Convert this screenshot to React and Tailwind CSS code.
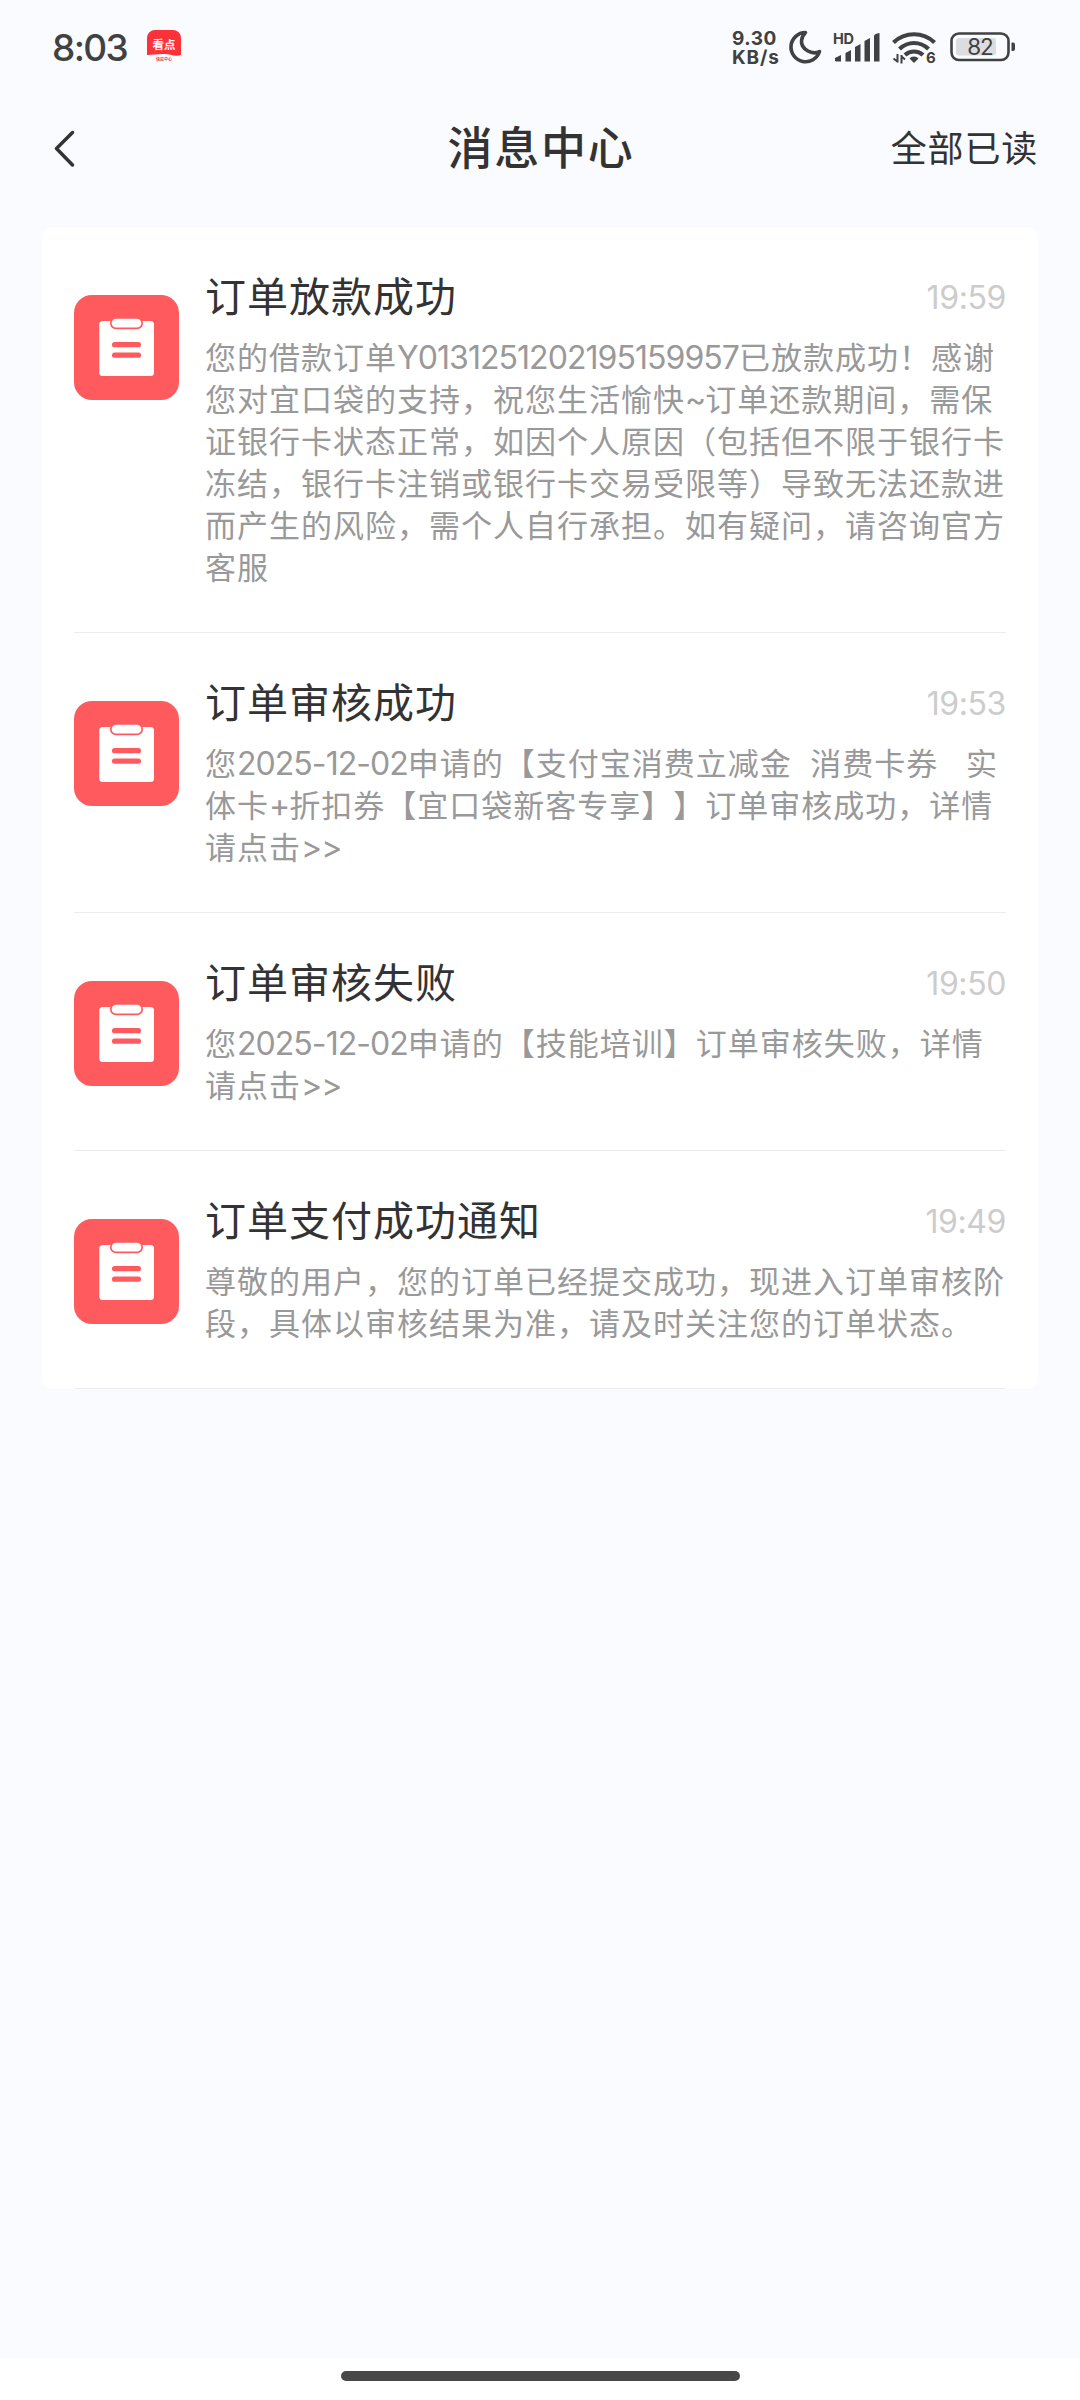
import React from "react";

const messages = [
  {
    id: 1,
    title: "订单放款成功",
    time: "19:59",
    lines: [
      "您的借款订单Y0131251202195159957已放款成功！感谢",
      "您对宜口袋的支持，祝您生活愉快~订单还款期间，需保",
      "证银行卡状态正常，如因个人原因（包括但不限于银行卡",
      "冻结，银行卡注销或银行卡交易受限等）导致无法还款进",
      "而产生的风险，需个人自行承担。如有疑问，请咨询官方",
      "客服",
    ],
  },
  {
    id: 2,
    title: "订单审核成功",
    time: "19:53",
    lines: [
      "您2025-12-02申请的【支付宝消费立减金  消费卡券   实",
      "体卡+折扣券【宜口袋新客专享】】订单审核成功，详情",
      "请点击>>",
    ],
  },
  {
    id: 3,
    title: "订单审核失败",
    time: "19:50",
    lines: ["您2025-12-02申请的【技能培训】订单审核失败，详情", "请点击>>"],
  },
  {
    id: 4,
    title: "订单支付成功通知",
    time: "19:49",
    lines: [
      "尊敬的用户，您的订单已经提交成功，现进入订单审核阶",
      "段，具体以审核结果为准，请及时关注您的订单状态。",
    ],
  },
];

const StatusBar = () => (
  <div className="flex h-[92px] items-center pl-[52px] pr-[64px] pt-px text-[#3f4142]">
    <span className="w-[95px] whitespace-nowrap pt-[2px] font-['Inter'] text-[37px] font-medium leading-[40px] tracking-[-1.6px]">
      8:03
    </span>
    <svg className="h-[34px] w-[34px]" viewBox="0 0 34 34">
      <rect width="34" height="33" rx="8" fill="#fff" />
      <path d="M0 8a8 8 0 0 1 8-8h18a8 8 0 0 1 8 8v17c-6 2-11-1-17-1-7 0-12 1-17 1z" fill="#fb3239" />
      <text x="17" y="18.5" textAnchor="middle" fontFamily="Noto Sans CJK SC, sans-serif" fontWeight="700" fontSize="11.5" fill="#fff">
        看点
      </text>
      <text x="17" y="31" textAnchor="middle" fontFamily="Noto Sans CJK SC, sans-serif" fontWeight="700" fontSize="4" fill="#d9434a">
        快应中心
      </text>
    </svg>
    <div className="ml-auto flex items-center">
      <div className="w-[56px] whitespace-nowrap pt-[2px] font-['Inter'] text-[19px] font-bold leading-[19px]">
        <div className="tracking-[0.5px]">9.30</div>
        <div className="tracking-[0.9px]">KB/s</div>
      </div>
      <svg className="mr-[10px] h-[36px] w-[34px]" viewBox="0 0 34 36" fill="none" stroke="currentColor" strokeWidth="3.6" strokeLinejoin="round">
        <path d="M17.5 3.5A14.6 14.6 0 1 0 31.5 22.5C24 26.5 13 20 13.5 12C13.7 8 15.5 5.5 17.5 3.5Z" />
      </svg>
      <svg className="mr-[12px] h-[34px] w-[48px] overflow-visible" viewBox="-1 0 48 34" fill="currentColor">
        <text x="0" y="13.5" fontFamily="Inter, sans-serif" fontWeight="700" fontSize="14.5" textLength="21">
          HD
        </text>
        <path d="M2 31V28L8 25V31.5H3Z" />
        <path d="M12.5 31.5V23L18 20V31.5Z" />
        <path d="M22 31.5V17L27.5 14V31.5Z" />
        <path d="M31.5 31.5V11L37 8V31.5Z" />
        <path d="M41 31.5V6Q41 4 46.5 3V31.5Z" />
      </svg>
      <svg className="mr-[14px] h-[34px] w-[44px] overflow-visible" viewBox="0 0 44 34" fill="none" stroke="currentColor" strokeWidth="4.2">
        <path d="M1.5 12.5C13 1.5 31 1.5 42.5 12.5" />
        <path d="M7.5 19C16 11 28 11 36.5 19" />
        <path d="M13 25C18 20.3 26 20.3 31 25" />
        <path d="M22 26.5q3 0 4.5 2L22 33l-4.5-4.5q1.5-2 4.5-2Z" fill="currentColor" stroke="none" />
        <path d="M5.5 24v8.5M6 32L1.5 28.5M9.5 33.5V25M9 26L13 29.5" strokeWidth="2" />
        <text x="34" y="32.5" fontFamily="Inter, sans-serif" fontWeight="700" fontSize="15" fill="currentColor" stroke="none">
          6
        </text>
      </svg>
      <svg className="h-[30px] w-[66px]" viewBox="0 0 66 30">
        <rect x="1.5" y="1.5" width="57" height="26.5" rx="7.5" fill="none" stroke="currentColor" strokeWidth="2.6" />
        <rect x="6" y="6" width="40" height="17.5" rx="3" fill="#dcdde0" />
        <path d="M61.5 10.5h1.5q2 0 2 2v4.5q0 2-2 2h-1.5z" fill="currentColor" />
        <text x="30" y="22.5" textAnchor="middle" fontFamily="Inter, sans-serif" fontSize="22.5" letterSpacing="-1" fill="currentColor">
          82
        </text>
      </svg>
    </div>
  </div>
);

const Header = () => (
  <header className="grid h-[112px] grid-cols-3 items-center px-[42px] text-[#333]">
    <button className="pl-[11px]">
      <svg className="h-[40px] w-[24px]" viewBox="0 0 24 40" fill="none" stroke="currentColor" strokeWidth="3.5" strokeLinecap="round" strokeLinejoin="round">
        <path d="M19.5 4.5L3.5 20.5L19.5 37" />
      </svg>
    </button>
    <h1 className="whitespace-nowrap pb-[5px] pl-[2px] text-center text-[45px] font-medium leading-none tracking-[1.8px]">
      消息中心
    </h1>
    <button className="whitespace-nowrap pb-[4px] text-right text-[36px] leading-none tracking-[0.8px]">
      全部已读
    </button>
  </header>
);

const OrderIcon = () => (
  <svg className="mt-[68px] h-[105px] w-[105px] shrink-0" viewBox="0 0 105 105">
    <rect width="105" height="105" rx="18" fill="#ff5a5d" />
    <rect x="25.3" y="26" width="54.7" height="55" rx="3.5" fill="#fff" />
    <rect x="36.8" y="23" width="31.4" height="10.4" rx="5.2" fill="#fff" stroke="#ff5a5d" strokeWidth="1.7" />
    <rect x="38" y="47" width="29" height="5.3" rx="2.6" fill="#ff5a5d" />
    <rect x="38" y="57.5" width="29" height="5.3" rx="2.6" fill="#ff5a5d" />
  </svg>
);

// latin letters and digits are set in a narrower face than the chinese text
const MessageLine = ({ text }) => (
  <div className="h-[42px] whitespace-pre">
    {text.split(/([\w\-+>~]+)/).map((part, index) =>
      /^[\w\-+>~]/.test(part) ? (
        <span key={index} className="font-['Inter'] text-[32px] leading-none tracking-[-0.95px]">
          {part}
        </span>
      ) : (
        part
      )
    )}
  </div>
);

const MessageItem = ({ message }) => (
  <li className="flex border-b border-[#ededed]">
    <OrderIcon />
    <div className="ml-[26px] flex-1">
      <div className="flex items-center justify-between pt-[39px]">
        <h2 className="text-[41px] leading-[56px] tracking-[1px] text-[#333]">{message.title}</h2>
        <span className="-mb-[4px] pt-[4px] font-['Inter'] text-[32px] leading-[56px] tracking-[-0.4px] text-[#ccc]">
          {message.time}
        </span>
      </div>
      <div className="mt-[13px] pb-[45px] text-[31px] leading-[42px] tracking-[1px] text-[#999] [text-spacing-trim:space-all] [word-spacing:1.3px]">
        {message.lines.map((line, index) => (
          <MessageLine key={index} text={line} />
        ))}
      </div>
    </div>
  </li>
);

function App() {
  return (
    <div className="flex h-[2400px] w-[1080px] flex-col overflow-hidden bg-[#fafbff] font-['Noto_Sans_CJK_SC',sans-serif]">
      <StatusBar />
      <Header />
      <main className="mx-[42px] mt-[23px] rounded-[10px] bg-white px-[32px]">
        <ul>
          {messages.map((message) => (
            <MessageItem key={message.id} message={message} />
          ))}
        </ul>
      </main>
      <footer className="mt-auto flex h-[42px] justify-center bg-white pt-[13px]">
        <div className="h-[10px] w-[399px] rounded-full bg-[#484848]" />
      </footer>
    </div>
  );
}

export default App;
